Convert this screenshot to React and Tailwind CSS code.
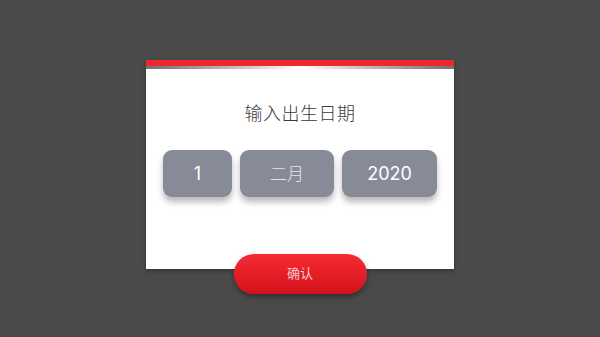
import React from "react";

const font = { fontFamily: '"Noto Sans", "Noto Sans CJK SC", sans-serif' };

function DateBox({ children, className }) {
  return (
    <div
      className={`h-[47px] rounded-[9px] bg-[#878b98] flex items-center justify-center shadow-[0_5px_6px_rgba(0,0,0,0.28)] ${className}`}
    >
      {children}
    </div>
  );
}

export default function App() {
  return (
    <div className="w-[600px] h-[337px] bg-[#4a4a4a] flex flex-col items-center pt-[60px]" style={font}>
      {/* card */}
      <div className="w-[308px] h-[209px] bg-white flex flex-col shadow-[0_2px_4px_rgba(0,0,0,0.3)]">
        <div className="h-[6px] bg-[#f0262e]" />
        <div className="h-[3px] bg-gradient-to-r from-[#707070] via-[#ffffff] to-[#707070]" />

        <h1 className="mt-[32px] text-center text-[18px] leading-[24px] font-light text-[#3a3a3a] tracking-[0.5px]">
          输入出生日期
        </h1>

        <div className="mt-[25px] flex justify-center gap-[8px]">
          <DateBox className="w-[69px]">
            <span className="text-white text-[18px]" style={{ fontFamily: "Inter, sans-serif" }}>1</span>
          </DateBox>
          <DateBox className="w-[94px]">
            <span className="text-[#e4e5ea] text-[17px] font-light">二月</span>
          </DateBox>
          <DateBox className="w-[95px]">
            <span className="text-white text-[18px]" style={{ fontFamily: "Inter, sans-serif" }}>2020</span>
          </DateBox>
        </div>
      </div>

      {/* confirm button */}
      <button className="relative -mt-[15px] w-[133px] h-[40px] rounded-full bg-gradient-to-b from-[#f52a33] to-[#d3111a] text-[#f9c9cc] text-[13px] shadow-[0_3px_5px_rgba(0,0,0,0.35)]">
        确认
      </button>
    </div>
  );
}
